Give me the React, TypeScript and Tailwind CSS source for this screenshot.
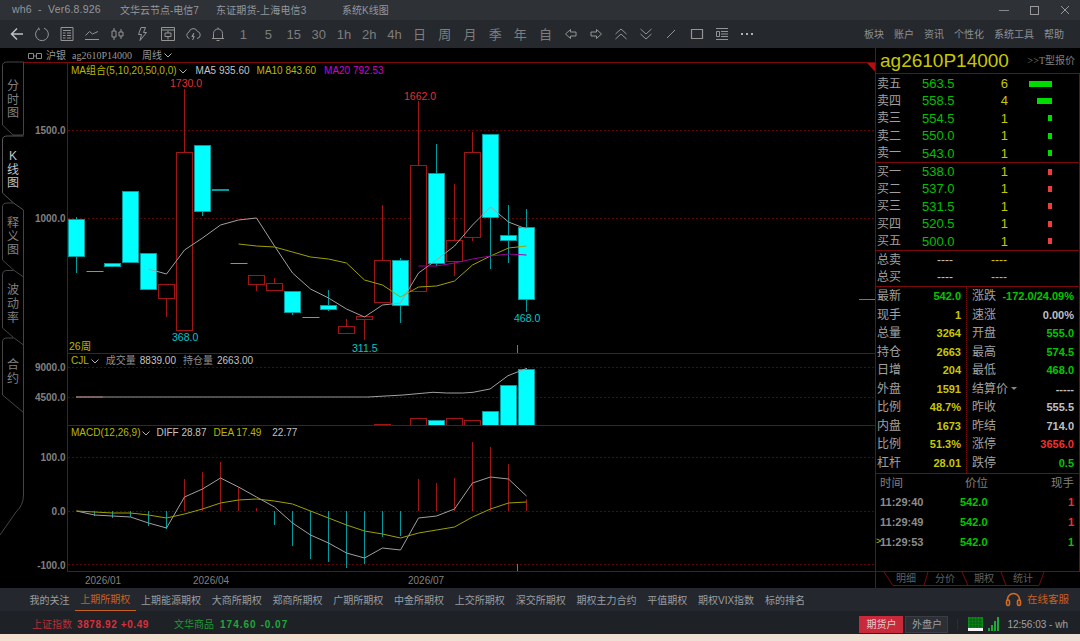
import React from "react";

// K line data in page pixels: kind, body top, body bottom, wick high, wick low
type Bar = { k: "c" | "r" | "f"; t: number; b: number; h?: number; l?: number };

const BARS: Bar[] = [
  { k: "c", t: 219, b: 256, h: 217, l: 273 },
  { k: "f", t: 271, b: 271 },
  { k: "c", t: 263, b: 266 },
  { k: "c", t: 191, b: 262, l: 263 },
  { k: "c", t: 253, b: 289, l: 290 },
  { k: "r", t: 284, b: 298, l: 317 },
  { k: "r", t: 152, b: 330, h: 89 },
  { k: "c", t: 145, b: 211, l: 216 },
  { k: "c", t: 189, b: 190 },
  { k: "f", t: 263, b: 263 },
  { k: "r", t: 275, b: 284, l: 291 },
  { k: "r", t: 283, b: 290, h: 278 },
  { k: "c", t: 291, b: 312, l: 315 },
  { k: "f", t: 317, b: 317 },
  { k: "c", t: 305, b: 309, h: 290, l: 311 },
  { k: "r", t: 326, b: 333, h: 319, l: 334 },
  { k: "r", t: 316, b: 319, l: 340 },
  { k: "r", t: 260, b: 302, h: 205 },
  { k: "c", t: 260, b: 305, h: 258, l: 323 },
  { k: "r", t: 165, b: 291, h: 101 },
  { k: "c", t: 173, b: 263, h: 144, l: 266 },
  { k: "r", t: 240, b: 261, h: 184, l: 276 },
  { k: "r", t: 152, b: 237, h: 132, l: 241 },
  { k: "c", t: 134, b: 217, l: 269 },
  { k: "c", t: 235, b: 240, h: 205, l: 263 },
  { k: "c", t: 227, b: 299, h: 209, l: 312 },
];

const cx = (i: number) => 76.5 + 18 * i;

const toPoints = (start: number, ys: number[]) =>
  ys.map((y, i) => `${cx(start + i)},${y}`).join(" ");

const MA5 = [269, 274, 250, 238, 225, 220, 218, 246, 273, 289, 298, 309, 317, 305, 303, 273, 260, 246, 225, 207, 222, 229];
const MA10 = [244, 246, 247, 252, 257, 259, 263, 280, 285, 297, 287, 286, 281, 265, 256, 248, 246];
const MA20 = [266, 266, 263, 259, 256, 254, 255];

const VOL: [number, number][] = [
  [17, 424], [19, 418], [20, 420], [21, 418], [22, 420], [23, 411], [24, 385], [25, 369],
];

const MACD_BARS = [0, 516, 518, 517, 526, 529, 479, 472, 462, 487, 508, 525, 546, 559, 562, 568, 564, 537, 536, 479, 483, 478, 442, 447, 464, 499];
const DIFF = [511, 515, 516, 517, 523, 528, 497, 489, 478, 487, 497, 507, 523, 535, 543, 553, 558, 548, 550, 518, 516, 509, 483, 477, 479, 496];
const DEA = [511, 512, 513, 513, 515, 518, 514, 509, 503, 500, 499, 501, 504, 511, 518, 525, 531, 534, 538, 533, 530, 527, 517, 509, 503, 502];

const ASKS = [
  { name: "卖五", price: "563.5", qty: "6", bar: "w-[23px]" },
  { name: "卖四", price: "558.5", qty: "4", bar: "w-[15px]" },
  { name: "卖三", price: "554.5", qty: "1", bar: "w-[4px]" },
  { name: "卖二", price: "550.0", qty: "1", bar: "w-[4px]" },
  { name: "卖一", price: "543.0", qty: "1", bar: "w-[4px]" },
];
const BIDS = [
  { name: "买一", price: "538.0", qty: "1" },
  { name: "买二", price: "537.0", qty: "1" },
  { name: "买三", price: "531.5", qty: "1" },
  { name: "买四", price: "520.5", qty: "1" },
  { name: "买五", price: "500.0", qty: "1" },
];

const YEL = "text-[#c8c800]";
const GRN = "text-[#00c800]";
const WHT = "text-[#c0c0c0]";
const RED = "text-[#f03030]";

const LEFT_STATS = [
  ["最新", "542.0", GRN],
  ["现手", "1", YEL],
  ["总量", "3264", YEL],
  ["持仓", "2663", YEL],
  ["日增", "204", YEL],
  ["外盘", "1591", YEL],
  ["比例", "48.7%", YEL],
  ["内盘", "1673", YEL],
  ["比例", "51.3%", YEL],
  ["杠杆", "28.01", YEL],
];
const RIGHT_STATS = [
  ["涨跌", "-172.0/24.09%", GRN],
  ["速涨", "0.00%", WHT],
  ["开盘", "555.0", GRN],
  ["最高", "574.5", GRN],
  ["最低", "468.0", GRN],
  ["结算价", "-----", WHT],
  ["昨收", "555.5", WHT],
  ["昨结", "714.0", WHT],
  ["涨停", "3656.0", RED],
  ["跌停", "0.5", GRN],
];

const TICKS = [
  { time: "11:29:40", qty: "1", color: RED, mark: false },
  { time: "11:29:49", qty: "1", color: RED, mark: false },
  { time: "11:29:53", qty: "1", color: GRN, mark: true },
];

const BOTTOM_TABS = ["我的关注", "上期所期权", "上期能源期权", "大商所期权", "郑商所期权", "广期所期权", "中金所期权", "上交所期权", "深交所期权", "期权主力合约", "平值期权", "期权VIX指数", "标的排名"];

function Ico({ children }: { children: React.ReactNode }) {
  return (
    <svg width="16" height="16" viewBox="0 0 16 16" fill="none" stroke="#949494" strokeWidth="1">
      {children}
    </svg>
  );
}

const TOOLS: React.ReactNode[] = [
  <Ico><path d="M14 8H3M8 2.5 2.5 8 8 13.5" strokeWidth="1.5" stroke="#c0c0c0" /></Ico>,
  <Ico><path d="M5 2.6A6.4 6.4 0 1 0 10 2.2M4.6 1.6l.9 2.6" /></Ico>,
  <Ico><path d="M2 1.5h12v13H2zM4 4.5h8M4 7h2.5M8 7h4M4 9.5h2.5M8 9.5h4M4 12h2.5M8 12h4" /></Ico>,
  <Ico><path d="M1 13.5h14M1.5 9.5l4-4 3 2.5 5.5-2.5" /></Ico>,
  <Ico><path d="M3 5h4v6H3zM5 2v3M5 11v3M10 6h4v4h-4zM12 3v3M12 10v3" /></Ico>,
  <Ico><path d="M10.5 1.5H6L3.5 8.5h3l-1.5 6 6.5-8H8.5z" /></Ico>,
  <Ico><path d="M1.5 1.5h13v13h-13zM1.5 4h13M5 7h6v3.5H5zM8 4.5V7M8 10.5v3" /></Ico>,
  <Ico><path d="M4.5 12.5A3.4 3.4 0 0 1 4 6a4.4 4.4 0 0 1 8.4-.6 3.6 3.6 0 0 1-.4 7.1" /><path d="M9 7 6.8 10.5h2.4L7.6 14" fill="#949494" /></Ico>,
  <Ico><path d="M3.5 12V7.5a4.5 4.5 0 0 1 9 0V12M2 12.5h12M8 1.5V3M6.5 14.5h3" /></Ico>,
  "1", "5", "15", "30", "1h", "2h", "4h", "日", "周", "月", "季", "年", "自",
  <Ico><path d="M7.5 3.5 2.5 8l5 4.5V10H13V6H7.5z" /></Ico>,
  <Ico><path d="M8.5 3.5 13.5 8l-5 4.5V10H3V6h5.5z" /></Ico>,
  <Ico><path d="M2.5 8 8 3l5.5 5M2.5 13 8 8l5.5 5" /></Ico>,
  <Ico><path d="M2.5 3 8 8l5.5-5M2.5 8 8 13l5.5-5" /></Ico>,
  <Ico><path d="M4 12 12 4" /></Ico>,
  <Ico><path d="M2.5 3.5h11v9h-11z" strokeWidth="1.2" /></Ico>,
  <Ico><path d="M2 2.5h12M2 13.5h12M7 5.5h7M7 8h7M7 10.5h7M2.5 5.5h3v5h-3z" /></Ico>,
  <Ico><path d="M2 8h2M7 8h2M12 8h2" strokeWidth="2" stroke="#b0b0b0" /></Ico>,
];

function Toolbar() {
  return (
    <div className="flex h-[28px] items-center bg-[#25282d] pl-[4px]">
      {TOOLS.map((t, i) => (
        <div key={i} className="flex w-[25.2px] justify-center text-[13px] leading-none text-[#7e7e7e]">
          {t}
        </div>
      ))}
      <div className="ml-auto flex gap-[10px] pt-[1px] pr-[16px] text-[10px] text-[#8e9195]">
        <span>板块</span>
        <span>账户</span>
        <span>资讯</span>
        <span>个性化</span>
        <span>系统工具</span>
        <span>帮助</span>
      </div>
    </div>
  );
}

function TitleBar() {
  return (
    <div className="flex h-[20px] items-center bg-[#2e3136] pl-[12px] text-[10px] text-[#94979b]">
      <span className="w-[108px] text-[10.5px] tracking-[0.2px]">wh6&nbsp; -&nbsp; Ver6.8.926</span>
      <span className="w-[96px]">文华云节点-电信7</span>
      <span className="w-[126px] tracking-[0.15px]">东证期货-上海电信3</span>
      <span>系统K线图</span>
      <div className="ml-auto flex items-center gap-[21px] pr-[10px]">
        <span className="h-px w-[10px] bg-[#888]" />
        <span className="h-[9px] w-[9px] border border-[#999]" />
        <svg width="10" height="10" viewBox="0 0 10 10" stroke="#999" fill="none">
          <path d="M1 1l8 8M9 1 1 9" />
        </svg>
      </div>
    </div>
  );
}

function LeftRail() {
  const tabs = [
    { chars: ["分", "时", "图"], h: "h-[73px]", on: false },
    { chars: ["K", "线", "图"], h: "h-[67px]", on: true },
    { chars: ["释", "义", "图"], h: "h-[67px]", on: false },
    { chars: ["波", "动", "率"], h: "h-[68px]", on: false },
    { chars: ["合", "约"], h: "h-[67px]", on: false },
  ];
  return (
    <div className="relative w-[24px] shrink-0 pt-[14px] pl-[2px]">
      <svg className="absolute inset-0" width="24" height="540" viewBox="0 48 24 540" fill="none" stroke="#444">
        <path d="M23.5 62V135H13L2.5 125V66Q2.5 62 7 62H23.5" />
        <path d="M23.5 136H7Q2.5 136 2.5 140V193L13.5 203L23.5 210" stroke="#555" />
        <path d="M13.5 203H7Q2.5 203 2.5 207V260L13.5 270L23.5 277" />
        <path d="M13.5 270.5H7Q2.5 270.5 2.5 275V328L13.5 337.5L23.5 345" />
        <path d="M13.5 338H7Q2.5 338 2.5 342V395L23.5 412.5" />
        <path d="M23.5 210V495Q23.5 505 16 512L0 535" />
      </svg>
      {tabs.map((t, i) => (
        <div
          key={i}
          className={`relative flex ${t.h} flex-col items-center justify-center pt-[4px] text-[12px] leading-[13.7px] ${t.on ? "text-[#c4c4c4]" : "text-[#808080]"}`}
        >
          {t.chars.map((c, j) => (
            <span key={j}>{c}</span>
          ))}
        </div>
      ))}
    </div>
  );
}

const Chevron = () => (
  <svg width="8" height="5" viewBox="0 0 8 5" fill="none" stroke="#b0b0b0" className="ml-[2px]">
    <path d="M.5.5 4 4 7.5.5" />
  </svg>
);

const Dash = ({ y }: { y: number }) => (
  <line x1={68} x2={875} y1={y} y2={y} stroke="#640000" strokeDasharray="2 2" />
);

// wick or histogram stem, one device pixel wide
const Stem = ({ x, y1, y2, color }: { x: number; y1: number; y2: number; color: string }) => (
  <rect x={x - 0.5} y={Math.min(y1, y2)} width={1} height={Math.abs(y2 - y1)} fill={color} />
);

const TEAL = "#009ca0";
const DARKRED = "#a01616";
const GREYLINE = "#a0a0a0";

function KPlot() {
  return (
    <svg className="absolute inset-0" width="807" height="290" viewBox="68 63 807 290" fill="none">
      <Dash y={130.5} />
      <Dash y={218.5} />
      {BARS.map((d, i) => {
        const x = cx(i);
        if (d.k === "f") {
          return <rect key={i} x={x - 8} y={d.t} width={17} height={1} fill="#909090" />;
        }
        const col = d.k === "c" ? TEAL : DARKRED;
        return (
          <g key={i}>
            {d.h !== undefined && <Stem x={x} y1={d.h} y2={d.t} color={col} />}
            {d.l !== undefined && <Stem x={x} y1={d.b} y2={d.l} color={col} />}
            <rect
              x={x - 8}
              y={d.t + 0.5}
              width={16}
              height={d.b - d.t}
              fill={d.k === "c" ? "#00ffff" : "#000000"}
              stroke={col}
            />
          </g>
        );
      })}
      <polyline points={toPoints(4, MA5)} stroke={GREYLINE} />
      <polyline points={toPoints(9, MA10)} stroke="#a0a000" />
      <polyline points={toPoints(19, MA20)} stroke="#a000a0" />
      <line x1="859" x2="875" y1="299.5" y2="299.5" stroke="#777" />
      <line x1="517.5" x2="517.5" y1="345" y2="353" stroke="#777" />
      <polygon points="867,63 875.5,63 875.5,72" fill="#b01010" />
    </svg>
  );
}

function VolPlot() {
  return (
    <svg className="absolute inset-0" width="807" height="71" viewBox="68 354 807 71" fill="none">
      <Dash y={367.5} />
      <Dash y={397.5} />
      <line x1="76" x2="103" y1="397" y2="397" stroke="#a08080" strokeWidth="1.5" />
      <line x1="103" x2="368" y1="397" y2="397" stroke="#666" strokeWidth="1.5" />
      {VOL.map(([i, top]) => (
        <rect
          key={i}
          x={cx(i) - 8}
          y={top + 0.5}
          width={16}
          height={425 - top}
          fill={i === 20 || i >= 23 ? "#00ffff" : "#000000"}
          stroke={i === 20 || i >= 23 ? TEAL : DARKRED}
        />
      ))}
      <polyline
        points="368,397 403,395 433,392.3 446.7,393 463,393 473,392.3 490,389 508,375.7 527,368.3"
        stroke={GREYLINE}
      />
    </svg>
  );
}

function MacdPlot() {
  return (
    <svg className="absolute inset-0" width="807" height="145" viewBox="68 426 807 145" fill="none">
      <Dash y={457.5} />
      <Dash y={511.5} />
      <Dash y={564.5} />
      {MACD_BARS.map((y, i) =>
        y === 0 ? null : <Stem key={i} x={cx(i)} y1={511} y2={y} color={y > 511 ? TEAL : DARKRED} />
      )}
      <polyline points={toPoints(0, DIFF)} stroke={GREYLINE} />
      <polyline points={toPoints(0, DEA)} stroke="#a0a000" />
      <line x1="517.5" x2="517.5" y1="564" y2="571" stroke="#777" />
    </svg>
  );
}

const AXIS = "absolute right-[1.5px] text-[10px] font-bold leading-[14px] text-[#808080]";

function ChartColumn() {
  return (
    <div className="flex w-[851px] shrink-0 flex-col">
      {/* symbol line */}
      <div className="flex h-[14px] items-center pt-[1px] pl-[4px] font-['Liberation_Serif','Noto_Sans_CJK_SC',serif] text-[10px] text-[#989898]">
        <svg width="14" height="6" viewBox="0 0 14 6" fill="none" stroke="#888">
          <path d="M.5.5h5v5h-5zM8.5.5h5v5h-5zM5 3h4" />
        </svg>
        <span className="ml-[4px]">沪银</span>
        <span className="ml-[6px]">ag2610P14000</span>
        <span className="ml-[10px]">周线</span>
        <Chevron />
      </div>

      {/* main K panel */}
      <div className="flex h-[291px]">
        <div className="relative w-[43px] shrink-0 border-t border-[#7a0a0a]">
          <span className={`${AXIS} top-[61px]`}>1500.0</span>
          <span className={`${AXIS} top-[149px]`}>1000.0</span>
        </div>
        <div className="relative flex-1 border-t border-l border-[#7a0a0a] text-[10.5px]">
          <KPlot />
          <div className="absolute top-[1px] left-[3px] flex items-center whitespace-nowrap text-[10px] leading-[14px]">
            <span className="text-[#b8b800]">MA组合(5,10,20,50,0,0)</span>
            <Chevron />
            <span className="ml-[9px] text-[#c4c4c4]">MA5 935.60</span>
            <span className="ml-[7px] text-[#b8b800]">MA10 843.60</span>
            <span className="ml-[8px] text-[#d000d0]">MA20 792.53</span>
          </div>
          <span className="absolute top-[13px] left-[102px] text-[#e03030]">1730.0</span>
          <span className="absolute top-[26px] left-[336px] text-[#e03030]">1662.0</span>
          <span className="absolute top-[267px] left-[104px] text-[#00c8c8]">368.0</span>
          <span className="absolute top-[278px] left-[284px] text-[#00c8c8]">311.5</span>
          <span className="absolute top-[248px] left-[446px] text-[#00c8c8]">468.0</span>
          <span className="absolute top-[276px] left-[1px] text-[#b8b800]">26周</span>
        </div>
      </div>

      {/* volume panel */}
      <div className="flex h-[72px]">
        <div className="relative w-[43px] shrink-0">
          <span className={`${AXIS} top-[8px]`}>9000.0</span>
          <span className={`${AXIS} top-[38px]`}>4500.0</span>
        </div>
        <div className="relative flex-1 border-t border-l border-[#7a0a0a]">
          <VolPlot />
          <div className="absolute top-[0px] left-[3px] flex items-center whitespace-nowrap text-[10px] leading-[14px]">
            <span className="text-[#b8b800]">CJL</span>
            <Chevron />
            <span className="ml-[7px] text-[#909090]">成交量</span>
            <span className="ml-[4px] text-[#c4c4c4]">8839.00</span>
            <span className="ml-[7px] text-[#909090]">持仓量</span>
            <span className="ml-[4px] text-[#c4c4c4]">2663.00</span>
          </div>
        </div>
      </div>

      {/* macd panel */}
      <div className="flex h-[147px]">
        <div className="relative w-[43px] shrink-0">
          <span className={`${AXIS} top-[26px]`}>100.0</span>
          <span className={`${AXIS} top-[80px]`}>0.0</span>
          <span className={`${AXIS} top-[134px]`}>-100.0</span>
        </div>
        <div className="relative flex-1 border-t border-b border-l border-[#7a0a0a]">
          <MacdPlot />
          <div className="absolute top-[0px] left-[3px] flex items-center whitespace-nowrap text-[10px] leading-[14px]">
            <span className="text-[#b8b800]">MACD(12,26,9)</span>
            <Chevron />
            <span className="ml-[6px] text-[#c4c4c4]">DIFF 28.87</span>
            <span className="ml-[7px] text-[#b8b800]">DEA 17.49</span>
            <span className="ml-[11px] text-[#c4c4c4]">22.77</span>
          </div>
        </div>
      </div>

      {/* date axis */}
      <div className="flex h-[16px] items-center pl-[61px] text-[10px] text-[#808080]">
        <span className="w-[108px]">2026/01</span>
        <span className="w-[215px]">2026/04</span>
        <span>2026/07</span>
      </div>
    </div>
  );
}

function QuoteRow({ name, price, qty, bar, barColor }: { name: string; price: string; qty: string; bar: string; barColor: string }) {
  return (
    <div className="flex h-[17.4px] items-center">
      <span className="w-[46px] pl-px text-[12px] text-[#a0a0a0]">{name}</span>
      <span className="w-[40px] text-[13px] text-[#00c000]">{price}</span>
      <span className="w-[46px] text-right text-[13px] text-[#c8c800]">{qty}</span>
      <div className="flex w-[44px] justify-end">
        <span className={`h-[6px] ${bar} ${barColor}`} />
      </div>
    </div>
  );
}

function QuotePanel() {
  return (
    <div className="relative flex w-[205px] shrink-0 flex-col border-l border-[#7a0a0a]">
      <div className="flex h-[25px] items-center justify-between pr-[5px] pl-[4px]">
        <span className="text-[19px] leading-none text-[#c8c800]">ag2610P14000</span>
        <span className="font-['Liberation_Serif','Noto_Sans_CJK_SC',serif] text-[10px] text-[#808080]">&gt;&gt;T型报价</span>
      </div>

      <div className="h-[89px] border-t border-r border-[#7a0a0a] pt-[1px]">
        {ASKS.map((r) => (
          <QuoteRow key={r.name} {...r} barColor="bg-[#00dc00]" />
        ))}
      </div>
      <div className="h-[88px] border-t border-r border-[#7a0a0a]">
        {BIDS.map((r) => (
          <QuoteRow key={r.name} {...r} bar="w-[4px]" barColor="bg-[#f03c3c]" />
        ))}
      </div>
      <div className="h-[36px] border-t border-r border-[#7a0a0a]">
        {["总卖", "总买"].map((n) => (
          <div key={n} className="flex h-[17.5px] items-center">
            <span className="w-[61px] pl-px text-[12px] text-[#a0a0a0]">{n}</span>
            <span className="w-[18px] text-[12px] text-[#c0c0c0]">----</span>
            <span className="ml-[36px] text-[12px] text-[#c8c800]">----</span>
          </div>
        ))}
      </div>

      {/* stats */}
      <div className="flex h-[188px] border-y border-r border-[#7a0a0a]">
        <div className="w-[91px] border-r border-dotted border-[#7a0a0a]">
          {LEFT_STATS.map(([n, v, c], i) => (
            <div key={i} className="flex h-[18.5px] items-center justify-between pr-[5px] pl-px">
              <span className="text-[12px] text-[#a0a0a0]">{n}</span>
              <span className={`text-[11px] font-bold ${c}`}>{v}</span>
            </div>
          ))}
        </div>
        <div className="flex-1">
          {RIGHT_STATS.map(([n, v, c], i) => (
            <div key={i} className="flex h-[18.5px] items-center justify-between pr-[5px] pl-[5px]">
              <span className="flex items-center text-[12px] text-[#a0a0a0]">
                {n}
                {n === "结算价" && <span className="ml-[3px] h-0 w-0 border-x-[3px] border-t-[3px] border-x-transparent border-t-[#888]" />}
              </span>
              <span className={`text-[11px] font-bold ${c}`}>{v}</span>
            </div>
          ))}
        </div>
      </div>

      {/* ticks */}
      <div className="h-[98px] border-r border-b border-[#7a0a0a] pr-[5px] pl-[4px]">
        <div className="flex h-[18px] items-center pt-[2px] text-[11.5px] text-[#808080]">
          <span className="w-[85px]">时间</span>
          <span>价位</span>
          <span className="ml-auto">现手</span>
        </div>
        {TICKS.map((t) => (
          <div key={t.time} className="relative flex h-[20px] items-center text-[11px] font-bold">
            {t.mark && <span className="absolute left-[-4px] text-[9px] font-normal text-[#c8c800]">&gt;</span>}
            <span className="w-[80px] text-[#8c8c8c]">{t.time}</span>
            <span className="text-[#00c800]">542.0</span>
            <span className={`ml-auto ${t.color}`}>{t.qty}</span>
          </div>
        ))}
      </div>

      {/* detail tabs */}
      <div className="relative flex h-[16px] items-center pb-[3px] pl-[20px] text-[10px] text-[#606060]">
        <svg className="absolute inset-0" width="205" height="15" viewBox="875 572 205 15" fill="none" stroke="#7a0a0a">
          <path d="M883 572L892 585.5H1038L1043 572M927 572L923 585.5M961 572L967 585.5M1000 572L1005 585.5" />
        </svg>
        <span className="w-[39px]">明细</span>
        <span className="w-[39px]">分价</span>
        <span className="w-[39px]">期权</span>
        <span>统计</span>
      </div>
    </div>
  );
}

function BottomTabs() {
  return (
    <div className="flex h-[23px] items-stretch bg-[#24282e] pl-[24px] text-[10px] text-[#9a9da0]">
      {BOTTOM_TABS.map((t) => (
        <span
          key={t}
          className={`flex items-center px-[5.4px] pt-[1px] ${t === "上期所期权" ? "border-b border-[#c8601e] text-[#c8601e]" : ""}`}
        >
          {t}
        </span>
      ))}
      <div className="ml-auto flex items-center gap-[5px] pr-[11px] text-[10.5px] text-[#c8601e]">
        <svg width="17" height="15" viewBox="0 0 17 15" fill="none" stroke="#d86a1e" strokeWidth="1.6">
          <path d="M2.5 9V7.5a6 6 0 0 1 12 0V9" />
          <rect x="1.5" y="8" width="3" height="5.5" rx="1.4" />
          <rect x="12.5" y="8" width="3" height="5.5" rx="1.4" />
        </svg>
        <span>在线客服</span>
      </div>
    </div>
  );
}

function StatusBar() {
  return (
    <div className="flex h-[23px] items-center bg-[#1e2126] pt-[4px] pl-[32px] text-[10px]">
      <span className="text-[#b83038]">上证指数</span>
      <span className="ml-[5px] font-bold tracking-[0.6px] text-[#d8303c]">3878.92 +0.49</span>
      <span className="ml-[25px] text-[#1e9a34]">文华商品</span>
      <span className="ml-[6px] font-bold tracking-[1px] text-[#1ea838]">174.60 -0.07</span>

      <div className="ml-auto flex items-center pr-[12px] text-[#9a9da0]">
        <span className="flex h-[17px] w-[44px] items-center justify-center bg-[#c82a3c] text-[#e8c8c8]">期货户</span>
        <span className="ml-[2px] flex h-[17px] w-[43px] items-center justify-center border border-[#3a3e44] bg-[#2c3036]">外盘户</span>
        <span className="ml-[9px] h-[11px] w-px bg-[#5a1a1a]" />
        <svg className="ml-[10px]" width="34" height="15" viewBox="0 0 34 15" fill="none">
          <rect x="0" y="0" width="15" height="13" fill="#0a8a1a" />
          <path d="M1 3h13M1 6h13M1 9h13M3 0v11M6 0v11M9 0v11M12 0v11" stroke="#065e12" />
          <rect x="0" y="11" width="15" height="3" fill="#f4f4f4" />
          <path d="M20 11h2v3h-2zM23 8h2v6h-2zM26 4h2v10h-2zM29 0h2v14h-2z" fill="#1ea838" />
        </svg>
        <span className="ml-[5px] whitespace-nowrap text-[#a0a3a6]">12:56:03 - wh</span>
      </div>
    </div>
  );
}

export default function App() {
  return (
    <div className="flex h-[641px] w-[1080px] flex-col overflow-hidden bg-black font-['Liberation_Sans','Noto_Sans_CJK_SC',sans-serif]">
      <TitleBar />
      <Toolbar />
      <div className="flex h-[540px]">
        <LeftRail />
        <ChartColumn />
        <QuotePanel />
      </div>
      <BottomTabs />
      <StatusBar />
      <div className="h-[7px] bg-gradient-to-r from-[#f3e0d0] to-[#ece0d6]" />
    </div>
  );
}
